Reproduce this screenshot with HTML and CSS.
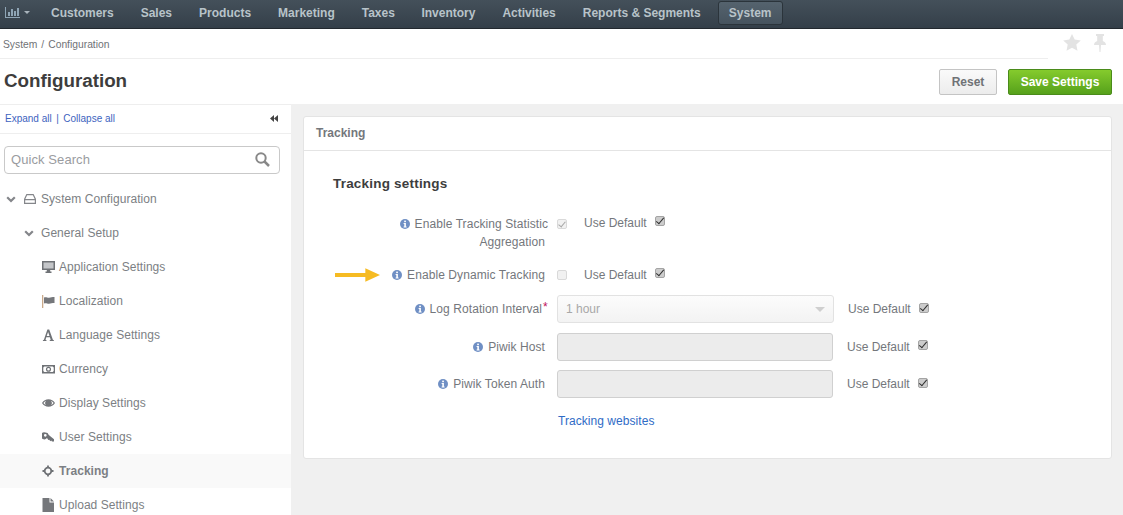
FILE: index.html
```html
<!DOCTYPE html>
<html lang="en">
<head>
<meta charset="utf-8">
<title>Configuration</title>
<link rel="stylesheet" href="styles.css">
</head>
<body>
<svg class="defs" width="0" height="0" aria-hidden="true">
  <symbol id="info" viewBox="0 0 10 10"><circle cx="5" cy="5" r="5" fill="#6f8fc4"/><rect x="4.2" y="1.6" width="1.7" height="1.6" fill="#fff"/><path d="M3.6 4h2.3v3.500h.7v1H3.600v-1h.7V5h-.7z" fill="#fff"/></symbol>
  <symbol id="chev" viewBox="0 0 10 7"><path d="M1.200 1.200L5 5l3.800-3.800" fill="none" stroke="#84868a" stroke-width="2.200"/></symbol>
</svg>
<nav class="topnav">
  <span class="nav-logo">
    <svg width="15" height="11" viewBox="0 0 15 11"><path d="M0 0h1v10h14v1H0z M3 5h2v4H3z M6 2h2v7H6z M9 4h2v5H9z M12 1h2v8h-2z" fill="#8fa5b5"/></svg>
    <span class="nav-caret"></span>
  </span>
  <a class="nav-item">Customers</a>
  <a class="nav-item">Sales</a>
  <a class="nav-item">Products</a>
  <a class="nav-item">Marketing</a>
  <a class="nav-item">Taxes</a>
  <a class="nav-item">Inventory</a>
  <a class="nav-item">Activities</a>
  <a class="nav-item">Reports &amp; Segments</a>
  <a class="nav-item nav-active">System</a>
</nav>
<div class="crumbs">
  <div class="crumb-text"><span>System</span><span class="crumb-sep">/</span><span>Configuration</span></div>
  <div class="crumb-icons">
    <svg width="18" height="17" viewBox="0 0 18 17"><path d="M9 0l2.700 5.600 6.100.8-4.500 4.200 1.200 6.100L9 13.700l-5.500 3 1.200-6.100L.2 6.400l6.100-.8z" fill="#e3e3e3"/></svg>
    <svg width="14" height="18" viewBox="0 0 14 18"><path d="M3 0h8v2H9.800v5c2 .8 3.200 2.200 3.200 4H8l-.5 7h-1L6 11H1c0-1.800 1.200-3.200 3.200-4V2H3z" fill="#e3e3e3"/></svg>
  </div>
</div>
<header class="titlebar">
  <h1>Configuration</h1>
  <div class="actions">
    <button class="btn btn-reset">Reset</button>
    <button class="btn btn-save">Save Settings</button>
  </div>
</header>
<div class="main">
  <aside class="sidebar">
    <div class="side-top">
      <span class="links"><a>Expand all</a><span class="pipe">|</span><a>Collapse all</a></span>
      <svg width="8" height="7" viewBox="0 0 8 7"><path d="M4 0v7L0 3.500z M8 0v7L4 3.500z" fill="#444"/></svg>
    </div>
    <div class="search">
      <span>Quick Search</span>
      <svg width="15" height="15" viewBox="0 0 15 15"><circle cx="6" cy="6" r="4.700" fill="none" stroke="#888" stroke-width="2"/><path d="M9.500 9.500L14 14" stroke="#888" stroke-width="2.500"/></svg>
    </div>
    <ul class="tree">
      <li class="row lvl0"><svg class="chev" width="10" height="7"><use href="#chev"/></svg><svg class="ico-drive" width="12" height="10" viewBox="0 0 12 10"><path d="M2.800.6h6.400l2.200 4.600v4.200H.6V5.200zM.6 5.600h10.800" fill="none" stroke="#84868a" stroke-width="1.200"/></svg><span>System Configuration</span></li>
      <li class="row lvl1"><svg class="chev" width="10" height="7"><use href="#chev"/></svg><span>General Setup</span></li>
      <li class="row lvl2"><svg class="ico" width="13" height="14" viewBox="0 0 13 14"><rect x=".75" y="1.750" width="11.500" height="7.500" fill="#c4c6c9" stroke="#6f7276" stroke-width="1.500"/><path d="M4.800 10h3.400v1.500h1.300V13h-6v-1.500h1.300z" fill="#6f7276"/></svg><span>Application Settings</span></li>
      <li class="row lvl2"><svg class="ico" width="13" height="14" viewBox="0 0 13 14"><path d="M0 1h1.300v13H0z" fill="#c9a98a"/><path d="M2 3.500c2-.8 3 .2 5 .2s3-.7 5.500-.7v6c-2.500 0-3.500 .7-5.500 .7s-3-1-5-.2z" fill="#75777b"/></svg><span>Localization</span></li>
      <li class="row lvl2"><svg class="ico" width="13" height="14" viewBox="0 0 13 14"><path d="M5.400 1.500h1.800l3.700 10.300 1 .4v.8H7.700v-.8l1-.4-.8-2.600H4.300l-.8 2.600 1 .4v.8H.9v-.8l1-.4zM6.100 4L4.700 8h2.800z" fill="#6f7276"/></svg><span>Language Settings</span></li>
      <li class="row lvl2"><svg class="ico" width="13" height="14" viewBox="0 0 13 14"><path fill-rule="evenodd" d="M0 3h13v8.500H0zM2.300 4.400L1.300 5.400v3.700l1 1h8.400l1-1V5.400l-1-1zM6.500 4.700a2.500 2.500 0 1 1 0 5.100 2.500 2.500 0 0 1 0-5.100zM6.500 5.900a1.300 1.300 0 1 0 0 2.700 1.300 1.300 0 0 0 0-2.700z" fill="#6f7276"/></svg><span>Currency</span></li>
      <li class="row lvl2"><svg class="ico" width="13" height="14" viewBox="0 0 13 14"><path fill-rule="evenodd" d="M0 7c1.600-2.500 3.800-3.700 6.500-3.700S11.400 4.500 13 7c-1.600 2.500-3.800 3.700-6.500 3.700S1.600 9.500 0 7zM1.400 7c.7 1 1.700 1.800 2.800 2.300a3.300 3.300 0 0 1 0-4.600C3.100 5.200 2.100 6 1.400 7zM8.800 4.700a3.300 3.300 0 0 1 0 4.600c1.100-.5 2.100-1.300 2.800-2.300-.7-1-1.700-1.800-2.800-2.300z" fill="#75777b"/><circle cx="6.500" cy="7" r="2.700" fill="#75777b"/></svg><span>Display Settings</span></li>
      <li class="row lvl2"><svg class="ico" width="13" height="14" viewBox="0 0 13 14"><path fill-rule="evenodd" d="M3.500 2.500a3.500 3.500 0 0 1 3.300 2.400l5.200 4.300v2.300h-2l-.8-1-.9.700-1-1.500-1 .2-1.300-1.800A3.500 3.500 0 1 1 3.500 2.500zM3.300 4a1.300 1.300 0 1 0 0 2.700A1.300 1.300 0 0 0 3.300 4z" fill="#6f7276"/></svg><span>User Settings</span></li>
      <li class="row lvl2 row-active"><svg class="ico" width="13" height="14" viewBox="0 0 13 14"><circle cx="6" cy="7" r="3.300" fill="none" stroke="#6f7276" stroke-width="1.800"/><path d="M6 1.500v2.400M6 10.100v2.400M.5 7h2.400M9.100 7h2.400" stroke="#6f7276" stroke-width="1.800"/></svg><span>Tracking</span></li>
      <li class="row lvl2"><svg class="ico" width="13" height="14" viewBox="0 0 13 14"><path d="M.5 0h7v4.500H12V14H.5zM8.500 0L12 3.500H8.500z" fill="#75777b"/></svg><span>Upload Settings</span></li>
    </ul>
  </aside>
  <section class="content">
    <div class="panel">
      <div class="panel-head">Tracking</div>
      <div class="panel-body">
        <h2>Tracking settings</h2>
        <div class="field field-first">
          <div class="lab lab-wide"><svg class="info" width="10" height="10"><use href="#info"/></svg>Enable Tracking Statistic<br><span class="lab-second">Aggregation</span></div>
          <span class="box box-dis checked"></span>
          <span class="use use-a">Use Default</span><span class="box box-on"></span>
        </div>
        <div class="field field-second">
          <svg class="arrow" width="46" height="14" viewBox="0 0 46 14"><path d="M0 5h31V0l15 7-15 7V9H0z" fill="#f6bb22"/></svg>
          <div class="lab"><svg class="info" width="10" height="10"><use href="#info"/></svg>Enable Dynamic Tracking</div>
          <span class="box box-dis"></span>
          <span class="use use-a">Use Default</span><span class="box box-on up2"></span>
        </div>
        <div class="field field-ctl first-ctl">
          <div class="lab"><svg class="info" width="10" height="10"><use href="#info"/></svg>Log Rotation Interval<i class="req">*</i></div>
          <div class="select"><span>1 hour</span><span class="sel-caret"></span></div>
          <span class="use use-b">Use Default</span><span class="box box-on up1"></span>
        </div>
        <div class="field field-ctl">
          <div class="lab"><svg class="info" width="10" height="10"><use href="#info"/></svg>Piwik Host</div>
          <div class="input"></div>
          <span class="use use-c">Use Default</span><span class="box box-on up2"></span>
        </div>
        <div class="field field-ctl">
          <div class="lab"><svg class="info" width="10" height="10"><use href="#info"/></svg>Piwik Token Auth</div>
          <div class="input"></div>
          <span class="use use-c">Use Default</span><span class="box box-on up1"></span>
        </div>
        <a class="web-link">Tracking websites</a>
      </div>
    </div>
  </section>
</div>
</body>
</html>
```
FILE: styles.css
```css
* { box-sizing: border-box; }
html, body { margin: 0; height: 515px; overflow: hidden; }
body { font-family: "Liberation Sans", Arial, sans-serif; font-size: 12px; color: #74777c; background: #fff; }
.defs { position: absolute; }
.topnav { height: 29px; display: flex; align-items: center; padding: 0 0 3px 5px; background: linear-gradient(#44505a, #343f49); border-bottom: 1px solid #22282e; }
.nav-logo { display: flex; align-items: center; gap: 4px; width: 46px; }
.nav-caret { width: 0; height: 0; border: 3px solid transparent; border-top: 3px solid #a9b4bc; border-bottom: 0; }
.nav-item { font-weight: 700; font-size: 12px; color: #b8c3c9; margin-right: 27px; white-space: nowrap; }
.nav-item:nth-of-type(5) { margin-right: 26.500px; }
.nav-active { margin: 0 0 0 -10px; padding: 0 10px; height: 24px; line-height: 22px; background: linear-gradient(#55636e, #46535e); border: 1px solid #2b343b; border-radius: 3px; }
.crumbs { height: 30px; display: flex; justify-content: space-between; align-items: center; padding: 0 16px 0 3px; position: relative; }
.crumb-text { font-size: 10.300px; display: flex; gap: 4px; color: #6f7276; padding-top: 1px; }
.crumb-icons { display: flex; gap: 12px; align-items: flex-start; margin-bottom: 2px; }
.crumbs::after { content: ""; position: absolute; left: 0; width: 1048px; bottom: 0; height: 1px; background: #eeeeee; }
.titlebar { height: 45px; display: flex; justify-content: space-between; align-items: center; padding: 1px 11px 0 4px; }
h1 { margin: 0 0 2px; font-size: 18.800px; line-height: 24px; font-weight: 700; color: #3d3d3d; }
.actions { display: flex; gap: 11px; }
.btn { height: 26px; font: 700 12px "Liberation Sans", Arial, sans-serif; border-radius: 2px; padding: 0; }
.btn-reset { width: 58px; background: linear-gradient(#fafafa, #ececec); border: 1px solid #c4c4c4; color: #6f7276; }
.btn-save { width: 104px; background: linear-gradient(#85cb2d, #56a11b); border: 1px solid #4a8b1a; color: #fff; }
.main { display: flex; height: 411px; }
.sidebar { width: 291px; flex: none; background: #fff; border-top: 1px solid #eeeeee; }
.side-top { height: 29px; display: flex; justify-content: space-between; align-items: center; padding: 0 13px 2px 5px; border-bottom: 1px solid #eeeeee; }
.links { font-size: 10px; color: #3d63c0; display: flex; gap: 4.500px; }
.search { margin: 12px 11px 0 4px; height: 28px; border: 1px solid #c9c9c9; border-radius: 4px; display: flex; justify-content: space-between; align-items: center; padding: 0 9px 0 6px; font-size: 13px; color: #9a9c9f; letter-spacing: .08px; }
.search span { margin-bottom: 1px; }
.search svg { margin-bottom: 1px; }
.tree { list-style: none; margin: 8px 0 0; padding: 0; }
.row { height: 34px; display: flex; align-items: center; font-size: 12px; color: #7c7f84; letter-spacing: .05px; }
.row span { white-space: nowrap; }
.lvl0 { padding-left: 6px; }
.lvl1 { padding-left: 24px; }
.lvl2 { padding-left: 42px; }
.chev { flex: none; }
.lvl0 .chev { margin-right: 8px; }
.lvl1 .chev { margin-right: 7px; }
.ico-drive { margin-right: 5px; }
.ico { margin-right: 4px; flex: none; }
.row-active { background: #f9f9f9; font-weight: 700; }
.content { flex: 1; background: #f0f0f0; padding: 12px 11px 0 12px; }
.panel { height: 343px; background: #fff; border: 1px solid #e4e4e4; border-radius: 3px; }
.panel-head { height: 34px; line-height: 31px; padding: 1px 0 0 12px; border-bottom: 1px solid #e4e4e4; font-weight: 700; font-size: 12px; color: #74777c; }
.panel-body { padding: 25px 0 0 29px; position: relative; }
h2 { margin: 0 0 24px; font-size: 13.500px; line-height: 15px; font-weight: 700; color: #3d3d3d; letter-spacing: .2px; }
.field { display: flex; align-items: center; }
.lab { width: 212px; flex: none; text-align: right; white-space: nowrap; letter-spacing: .08px; }
.info { margin-right: 5px; vertical-align: -1px; }
.field-first { height: 45px; align-items: flex-start; }
.lab-wide { width: 215px; line-height: 18px; margin-right: -3px; }
.lab-second { margin-right: 3px; }
.field-first .box-dis { margin-top: 4px; }
.field-first .use { margin-top: -1px; line-height: 19px; }
.field-first .box-on { margin-top: 1px; }
.field-second { height: 30px; position: relative; }
.arrow { position: absolute; left: 2px; top: 8px; width: 45px; }
.box { width: 10px; height: 10px; flex: none; position: relative; display: inline-block; border-radius: 2px; }
.box-dis { margin-left: 12px; background: #f1f1f1; border: 1px solid #d9d9d9; }
.box-dis.checked::after { content: ""; position: absolute; left: 2px; top: 0; width: 3px; height: 6px; border: solid #a6a6a6; border-width: 0 1.500px 1.500px 0; transform: rotate(40deg); }
.box-on { margin-left: 8px; background: #cccccc; border: 1px solid #a4a4a4; }
.box-on::after { content: ""; position: absolute; left: 2.500px; top: -1px; width: 3px; height: 7px; border: solid #2f2f2f; border-width: 0 1.700px 1.700px 0; transform: rotate(40deg); }
.up1 { margin-bottom: 2px; }
.up2 { margin-bottom: 4px; }
.use { white-space: nowrap; }
.use-a { margin-left: 17px; }
.field-ctl { height: 28px; margin-bottom: 9.500px; }
.first-ctl { margin-top: 5px; }
.first-ctl .lab { padding-right: 3px; }
.req { color: #c0145c; font-style: normal; position: absolute; margin: -2px 0 0 1px; }
.select, .input { margin-left: 12px; width: 276px; height: 28px; border-radius: 3px; flex: none; }
.select { background: linear-gradient(#fcfcfc, #f3f3f3); border: 1px solid #e2e2e2; display: flex; justify-content: space-between; align-items: center; padding: 0 8px; color: #a8a8a8; width: 277px; }
.sel-caret { width: 0; height: 0; border: 5px solid transparent; border-top: 5px solid #cfcfcf; border-bottom: 0; }
.input { background: #ececec; border: 1px solid #d0d0d0; }
.use-b { margin-left: 14px; }
.use-c { margin-left: 14px; }
.web-link { display: block; margin: 16px 0 0 225px; color: #2f6bc6; white-space: nowrap; letter-spacing: .05px; }
```
